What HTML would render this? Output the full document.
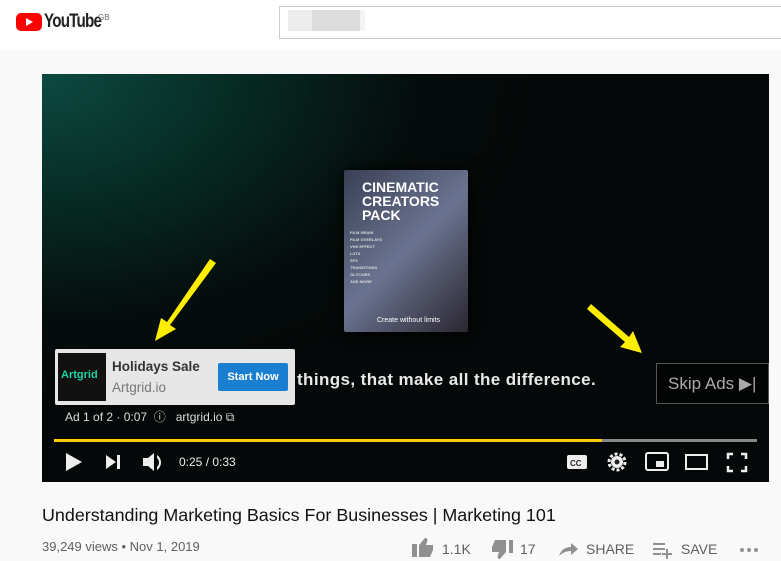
<!DOCTYPE html>
<html><head><style>
body{margin:0;width:781px;height:561px;overflow:hidden;background:#f9f9f9;font-family:"Liberation Sans",Arial,sans-serif;position:relative}
.hdr{position:absolute;left:0;top:0;width:781px;height:50px;background:#fff}
.a{position:absolute}
</style></head><body>
<div class="hdr">
 <svg class="a" style="left:16px;top:13px" width="26" height="18" viewBox="0 0 26 18"><rect width="26" height="18" rx="5" fill="#f00"/><path d="M10 5l7 4-7 4z" fill="#fff"/></svg>
 <div class="a" style="left:44px;top:11px;font-size:19px;letter-spacing:-1px;color:#222;font-weight:bold;transform:scaleX(.8);transform-origin:left">YouTube</div>
 <div class="a" style="left:98px;top:13px;font-size:8px;color:#666">GB</div>
 <div class="a" style="left:279px;top:6px;width:510px;height:31px;border:1px solid #ccc;background:#fff"></div>
 <div class="a" style="left:288px;top:10px;width:24px;height:21px;background:#ececec"></div>
 <div class="a" style="left:312px;top:10px;width:48px;height:21px;background:#dcdcdc"></div>
 <div class="a" style="left:360px;top:10px;width:5px;height:21px;background:#f4f4f4"></div>
</div>
<div class="a" style="left:42px;top:74px;width:727px;height:408px;background:radial-gradient(ellipse 500px 330px at 0 0,#0c4a40 0%,#06261f 45%,#050d0c 75%,#050808 100%)"></div>
<div class="a" style="left:344px;top:170px;width:124px;height:162px;background:linear-gradient(135deg,#3a3f55,#6a7390 50%,#2a2630);border-radius:2px;box-shadow:0 0 14px #000"></div>
<div class="a" style="left:362px;top:180px;font-size:14px;font-weight:bold;color:#fff;line-height:14px">CINEMATIC<br>CREATORS<br>PACK</div>
<div class="a" style="left:377px;top:317px;font-size:7px;color:#fff">Create without limits</div>
<div class="a" style="left:350px;top:229px;font-size:4px;line-height:7px;color:#ddd;font-weight:bold">FILM GRAIN<br>FILM OVERLAYS<br>VHS EFFECT<br>LUTS<br>SFX<br>TRANSITIONS<br>GLITCHES<br>AND MORE</div>
<div class="a" style="left:297px;top:370px;font-size:17px;color:#e8e8e8;font-weight:bold;letter-spacing:.4px">things, that make all the difference.</div>
<div class="a" style="left:55px;top:349px;width:240px;height:56px;background:#e6e6e6;border-radius:2px"></div>
<div class="a" style="left:58px;top:353px;width:48px;height:48px;background:#111"></div>
<div class="a" style="left:61px;top:369px;font-size:11px;font-weight:bold;color:#1dd3a7">Artgrid</div>
<div class="a" style="left:112px;top:359px;font-size:13.5px;font-weight:bold;color:#333">Holidays Sale</div>
<div class="a" style="left:112px;top:380px;font-size:13.5px;color:#777">Artgrid.io</div>
<div class="a" style="left:218px;top:363px;width:70px;height:28px;background:#1a7fd0;border-radius:2px;color:#fff;font-size:11px;font-weight:bold;text-align:center;line-height:28px">Start Now</div>
<div class="a" style="left:65px;top:408px;font-size:12px;color:#ddd">Ad 1 of 2 · 0:07 &nbsp;ⓘ &nbsp;&nbsp;artgrid.io ⧉</div>
<div class="a" style="left:656px;top:363px;width:113px;height:41px;border:1px solid #555;background:rgba(0,0,0,.4);box-sizing:border-box;color:#aaa;font-size:17px;line-height:40px;padding-left:11px">Skip Ads ▶|</div>
<svg class="a" style="left:0;top:0" width="781" height="561"><g fill="#ffee00"><path d="M210 259l6 4-46 62 6 4-21 12 6-23 6 4z"/><path d="M587 309l4-5 38 33 4-6 9 22-22-6 5-5z"/></g></svg>
<div class="a" style="left:54px;top:439px;width:703px;height:3px;background:#888"></div>
<div class="a" style="left:54px;top:439px;width:548px;height:3px;background:#fc0"></div>
<svg class="a" style="left:0;top:0" width="781" height="561" fill="#eee">
<path d="M66 453l16 9-16 9z"/><path d="M106 455l10 7-10 7z"/><rect x="117" y="455" width="3" height="14"/>
<path d="M143 458h5l6-5v18l-6-5h-5z"/><path d="M157 455a9 9 0 0 1 0 15v-3a6 6 0 0 0 0-9z"/>
<rect x="567" y="455" width="20" height="14" rx="2"/><text x="570" y="466" font-size="8" font-weight="bold" fill="#222" font-family="Liberation Sans">CC</text>
<circle cx="617" cy="462" r="8" fill="none" stroke="#eee" stroke-width="3" stroke-dasharray="3 2"/><circle cx="617" cy="462" r="6"/><circle cx="617" cy="462" r="2.5" fill="#222"/>
<rect x="646" y="453" width="22" height="17" rx="2" fill="none" stroke="#eee" stroke-width="2"/><rect x="656" y="461" width="8" height="6"/>
<rect x="686" y="455" width="21" height="14" fill="none" stroke="#eee" stroke-width="2"/>
<path d="M728 459v-5h5M741 454h5v5M746 466v5h-5M733 471h-5v-5" fill="none" stroke="#eee" stroke-width="2.5"/>
</svg>
<div class="a" style="left:179px;top:455px;font-size:12px;color:#eee">0:25 / 0:33</div>
<div class="a" style="left:42px;top:505px;font-size:17.9px;color:#111">Understanding Marketing Basics For Businesses | Marketing 101</div>
<div class="a" style="left:42px;top:539px;font-size:13px;color:#606060">39,249 views • Nov 1, 2019</div>
<svg class="a" style="left:0;top:0" width="781" height="561" fill="#909090">
<path d="M412 544h5v13h-5zM419 557v-12l6-7c2 0 3 1 2 4l-1 3h7v5l-3 7z"/>
<path d="M509 540h4v13h-4zM506 540v12l-6 7c-2 0-3-1-2-4l1-3h-7v-5l3-7z"/>
<path d="M559 556c2-6 6-9 12-9v-4l7 6-7 6v-4c-5 0-9 2-12 5z"/>
<path d="M653 543h12v2h-12zM653 548h12v2h-12zM653 553h8v2h-8zM666 549h2v4h4v2h-4v4h-2v-4h-4v-2h4z"/>
<circle cx="742" cy="550" r="2"/><circle cx="749" cy="550" r="2"/><circle cx="756" cy="550" r="2"/>
</svg>
<div class="a" style="left:442px;top:541px;font-size:14px;color:#606060">1.1K</div>
<div class="a" style="left:520px;top:541px;font-size:14px;color:#606060">17</div>
<div class="a" style="left:586px;top:541px;font-size:14px;color:#606060">SHARE</div>
<div class="a" style="left:681px;top:541px;font-size:14px;color:#606060">SAVE</div>
</body></html>
